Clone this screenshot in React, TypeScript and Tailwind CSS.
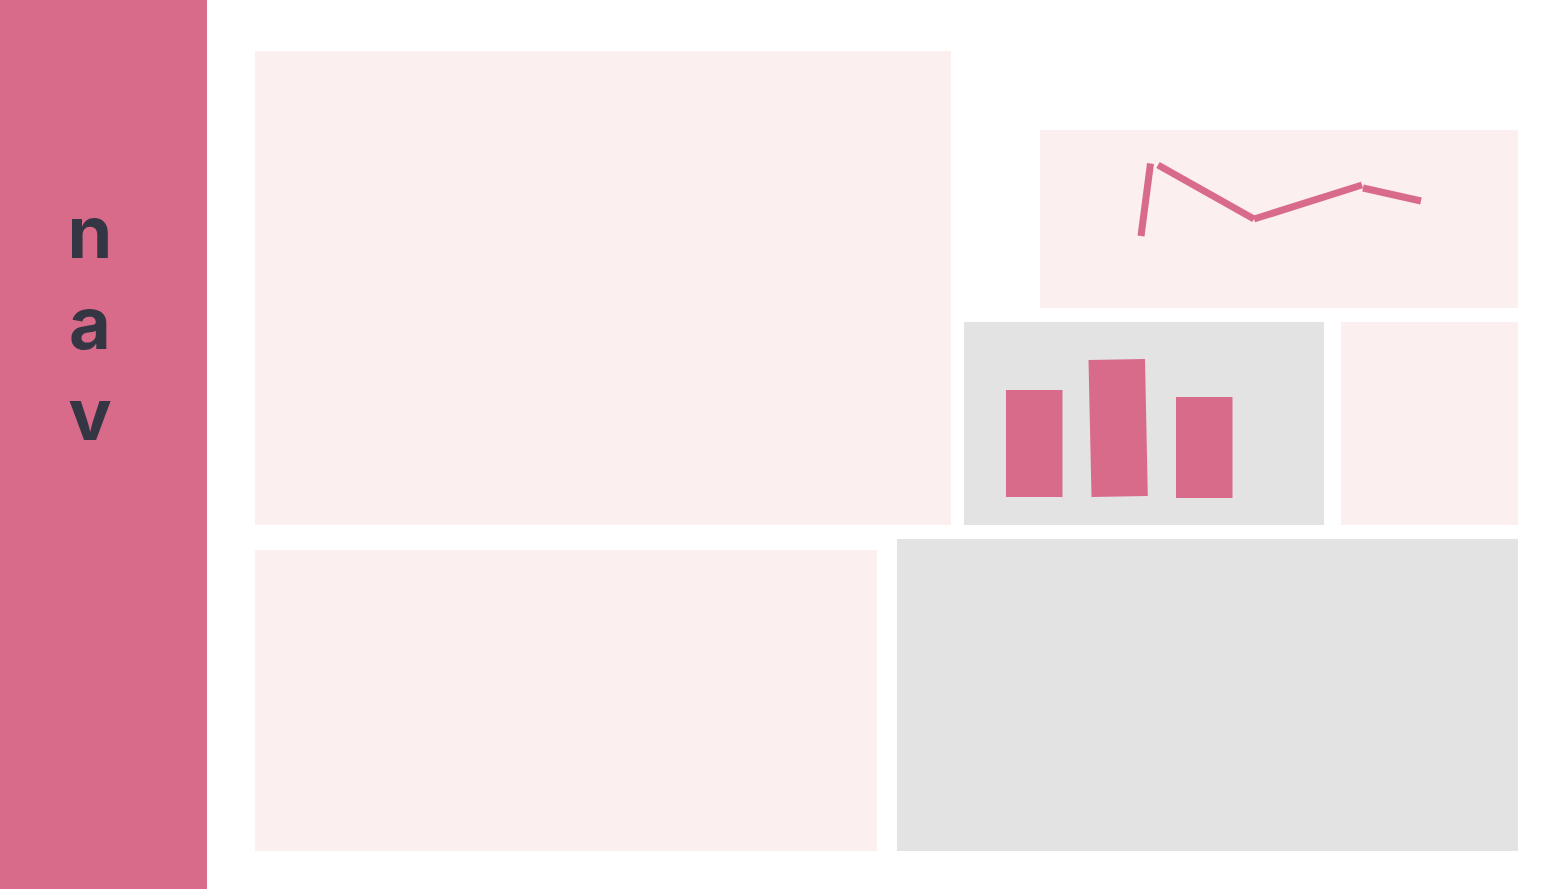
import React from "react";

function LineChart() {
  return (
    <svg className="absolute left-0 top-0" width="478" height="178" viewBox="0 0 478 178">
      <g stroke="#d96b8a" strokeWidth="7" strokeLinecap="butt" fill="none">
        <line x1="101" y1="106" x2="110.5" y2="33.5" />
        <line x1="118" y1="35" x2="214" y2="89" />
        <polyline points="214,89 322,55" />
        <line x1="323" y1="58" x2="381" y2="71" />
      </g>
    </svg>
  );
}

function BarChart() {
  return (
    <svg className="absolute left-0 top-0" width="360" height="203" viewBox="0 0 360 203">
      <g fill="#d96b8a">
        <rect x="42" y="68" width="56.5" height="107" />
        <polygon points="124.5,38 181,37 183.8,174 127.5,175" />
        <rect x="212" y="75" width="56.5" height="101" />
      </g>
    </svg>
  );
}

export default function App() {
  return (
    <div className="flex h-[889px] w-[1565px] bg-white" style={{ fontFamily: "Inter, 'Liberation Sans', sans-serif" }}>
      <nav className="h-full w-[207px] shrink-0 bg-[#d96b8a] pt-[186px] pr-[27px] text-center">
        <div className="text-[72px] font-bold leading-[91px] text-[#343643]">n</div>
        <div className="text-[72px] font-bold leading-[91px] text-[#343643]">a</div>
        <div className="text-[72px] font-bold leading-[91px] text-[#343643]">v</div>
      </nav>
      <main className="flex flex-1 flex-col pl-[48px] pr-[47px] pt-[51px]">
        <div className="flex h-[474px] gap-[13px]">
          <div className="h-full w-[696px] bg-[#fbefef]" />
          <div className="flex flex-1 flex-col justify-end gap-[14px]">
            <div className="relative ml-[76px] h-[178px] bg-[#fbefef]">
              <LineChart />
            </div>
            <div className="flex h-[203px] gap-[17px]">
              <div className="relative w-[360px] bg-[#e3e3e3]">
                <BarChart />
              </div>
              <div className="flex-1 bg-[#fbefef]" />
            </div>
          </div>
        </div>
        <div className="mt-[14px] flex h-[312px] items-end gap-[20px]">
          <div className="h-[301px] w-[622px] bg-[#fbefef]" />
          <div className="h-[312px] flex-1 bg-[#e3e3e3]" />
        </div>
      </main>
    </div>
  );
}
